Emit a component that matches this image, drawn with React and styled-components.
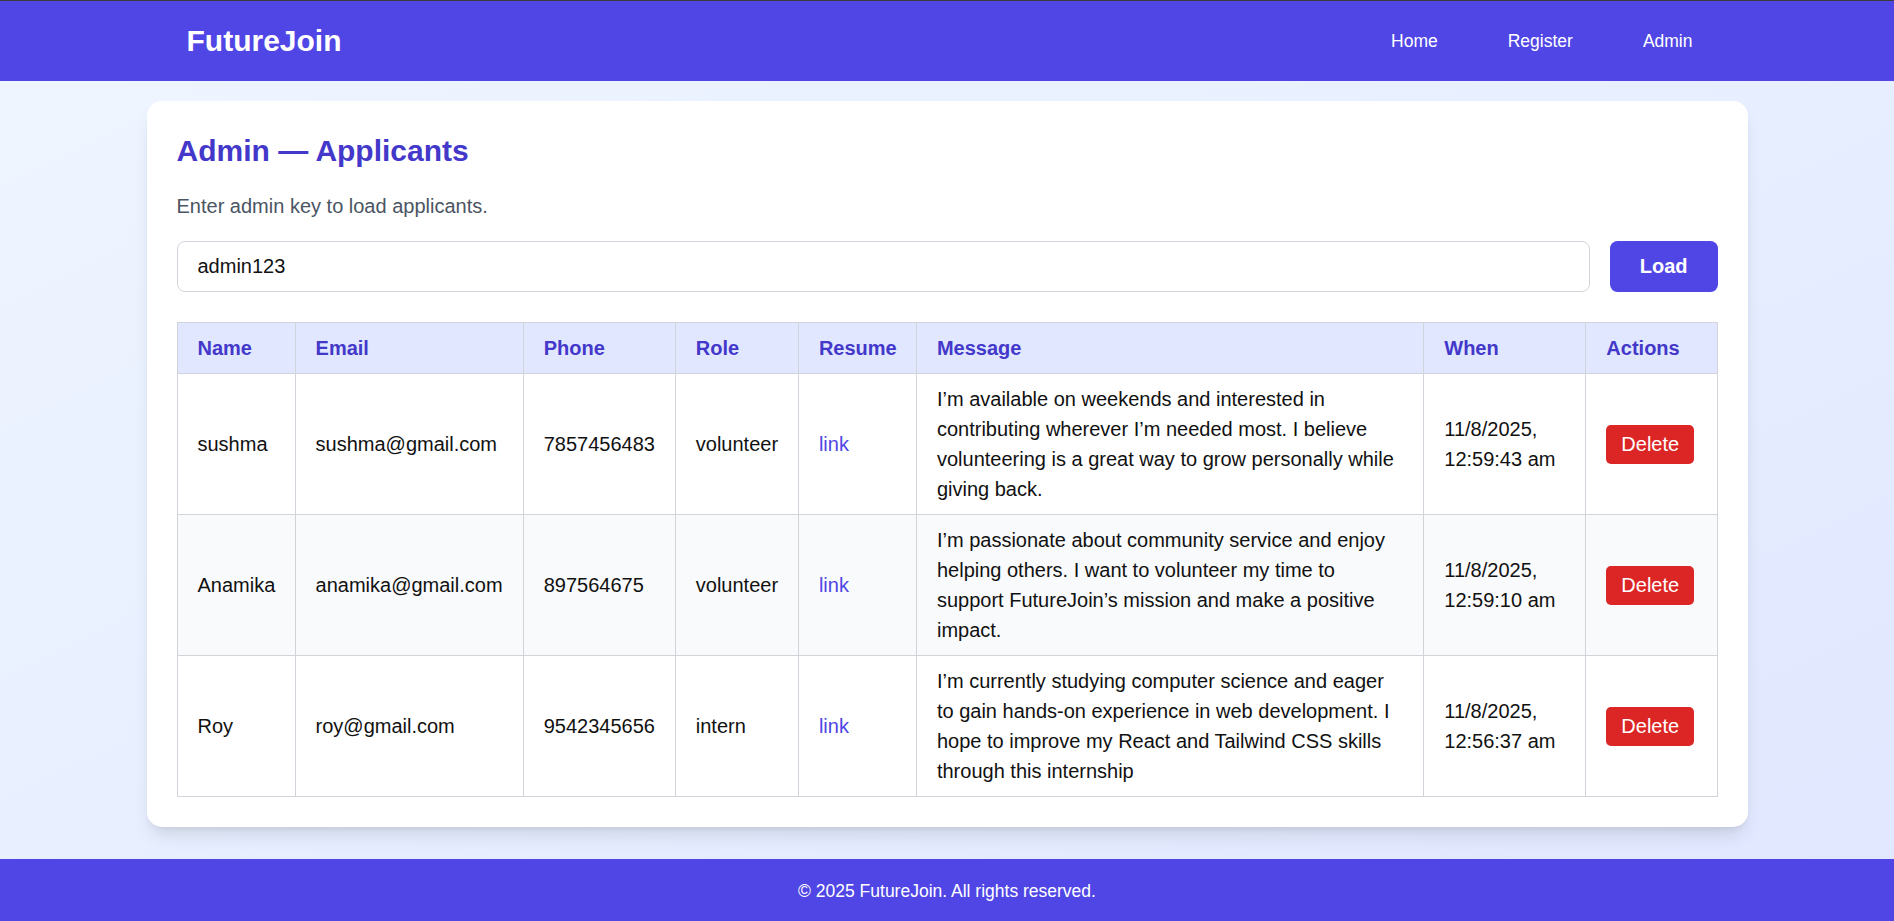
import styled, { createGlobalStyle } from "styled-components"

const GlobalStyle = createGlobalStyle`
    html, body {
        margin: 0;
        padding: 0;
        overflow: hidden;
    }
    body {
        font-family: "Liberation Sans", Arial, sans-serif;
        border-top: 1px solid #3b3b3b;
    }
    * {
        box-sizing: border-box;
    }
`

const applicants = [
    {
        name: "sushma",
        email: "sushma@gmail.com",
        phone: "7857456483",
        role: "volunteer",
        message: "I’m available on weekends and interested in contributing wherever I’m needed most. I believe volunteering is a great way to grow personally while giving back.",
        date: "11/8/2025,",
        time: "12:59:43 am",
    },
    {
        name: "Anamika",
        email: "anamika@gmail.com",
        phone: "897564675",
        role: "volunteer",
        message: "I’m passionate about community service and enjoy helping others. I want to volunteer my time to support FutureJoin’s mission and make a positive impact.",
        date: "11/8/2025,",
        time: "12:59:10 am",
    },
    {
        name: "Roy",
        email: "roy@gmail.com",
        phone: "9542345656",
        role: "intern",
        message: "I’m currently studying computer science and eager to gain hands-on experience in web development. I hope to improve my React and Tailwind CSS skills through this internship",
        date: "11/8/2025,",
        time: "12:56:37 am",
    },
]

const columns = [
    { label: "Name", width: 118 },
    { label: "Email", width: 228 },
    { label: "Phone", width: 152 },
    { label: "Role", width: 123 },
    { label: "Resume", width: 118 },
    { label: "Message", width: 507 },
    { label: "When", width: 162 },
    { label: "Actions", width: 131 },
]

export default function App() {
    return (
        <Page>
            <GlobalStyle />
            <Header>
                <HeaderInner>
                    <Logo>FutureJoin</Logo>
                    <Nav>
                        <NavLink href="#">Home</NavLink>
                        <NavLink href="#">Register</NavLink>
                        <NavLink href="#">Admin</NavLink>
                    </Nav>
                </HeaderInner>
            </Header>

            <Main>
                <Card>
                    <Title>Admin — Applicants</Title>
                    <Subtitle>Enter admin key to load applicants.</Subtitle>

                    <KeyRow>
                        <KeyInput defaultValue="admin123" />
                        <LoadButton>Load</LoadButton>
                    </KeyRow>

                    <Table>
                        <colgroup>
                            {columns.map((c) => (
                                <Col key={c.label} $w={c.width} />
                            ))}
                        </colgroup>
                        <thead>
                            <tr>
                                {columns.map((c) => (
                                    <Th key={c.label}>{c.label}</Th>
                                ))}
                            </tr>
                        </thead>
                        <tbody>
                            {applicants.map((a) => (
                                <Row key={a.email}>
                                    <Td>{a.name}</Td>
                                    <Td>{a.email}</Td>
                                    <Td>{a.phone}</Td>
                                    <Td>{a.role}</Td>
                                    <Td>
                                        <ResumeLink href="#">link</ResumeLink>
                                    </Td>
                                    <Td>{a.message}</Td>
                                    <Td>
                                        {a.date}
                                        <br />
                                        {a.time}
                                    </Td>
                                    <Td>
                                        <DeleteButton>Delete</DeleteButton>
                                    </Td>
                                </Row>
                            ))}
                        </tbody>
                    </Table>
                </Card>
            </Main>

            <Footer>© 2025 FutureJoin. All rights reserved.</Footer>
        </Page>
    )
}

const Page = styled.div`
    display: flex;
    flex-direction: column;
    min-height: 920px;
    background: linear-gradient(to bottom right, #eff6ff, #e0e7ff);
`

const Header = styled.header`
    background: #4f46e5;
    color: white;
`

const HeaderInner = styled.div`
    max-width: 1601px;
    height: 80px;
    margin: 0 auto;
    padding: 0 40px;
    display: flex;
    align-items: center;
    justify-content: space-between;
`

const Logo = styled.div`
    font-size: 30px;
    font-weight: 700;
    line-height: 40px;
`

const Nav = styled.nav`
    display: flex;
    gap: 40px;
`

const NavLink = styled.a`
    color: white;
    text-decoration: none;
    font-size: 17.5px;
    line-height: 25px;
    padding: 0 15px;
`

const Main = styled.main`
    flex: 1;
    padding: 20px 0 32px;
`

const Card = styled.section`
    max-width: 1601px;
    margin: 0 auto;
    padding: 30px;
    background: white;
    border-radius: 15px;
    box-shadow: 0 12px 18px -4px rgba(0, 0, 0, 0.1), 0 5px 8px -5px rgba(0, 0, 0, 0.1);
`

const Title = styled.h1`
    margin: 0 0 21px;
    font-size: 30px;
    line-height: 39px;
    font-weight: 700;
    color: #4338ca;
`

const Subtitle = styled.p`
    margin: 0 0 20px;
    font-size: 20px;
    line-height: 30px;
    color: #4b5563;
`

const KeyRow = styled.div`
    display: flex;
    gap: 20px;
    margin-bottom: 30px;
`

const KeyInput = styled.input`
    flex: 1;
    height: 51px;
    padding: 10px 20px;
    font-family: inherit;
    font-size: 20px;
    color: #111;
    border: 1px solid #d1d5db;
    border-radius: 8px;
    outline: none;
`

const LoadButton = styled.button`
    height: 51px;
    padding: 0 30px;
    font-family: inherit;
    font-size: 20px;
    font-weight: 700;
    color: white;
    background: #4f46e5;
    border: none;
    border-radius: 7.5px;
`

const Table = styled.table`
    width: 100%;
    table-layout: fixed;
    border-collapse: collapse;
    border: 1px solid #d1d5db;
    font-size: 20px;
    line-height: 30px;
`

const Col = styled.col`
    width: ${(p) => p.$w}px;
`

const Th = styled.th`
    padding: 10px 20px;
    text-align: left;
    font-weight: 700;
    color: #4338ca;
    background: #e0e7ff;
    border: 1px solid #d1d5db;
`

const Row = styled.tr`
    &:nth-child(even) {
        background: #f9fafb;
    }
`

const Td = styled.td`
    padding: 10px 20px;
    color: #111;
    border: 1px solid #d1d5db;
    vertical-align: middle;
`

const ResumeLink = styled.a`
    color: #4f46e5;
    text-decoration: none;
`

const DeleteButton = styled.button`
    height: 39px;
    padding: 0 15px;
    font-family: inherit;
    font-size: 20px;
    color: white;
    background: #dc2626;
    border: none;
    border-radius: 5px;
`

const Footer = styled.footer`
    background: #4f46e5;
    color: white;
    text-align: center;
    font-size: 17.5px;
    line-height: 25px;
    padding: 20px 0;
`
